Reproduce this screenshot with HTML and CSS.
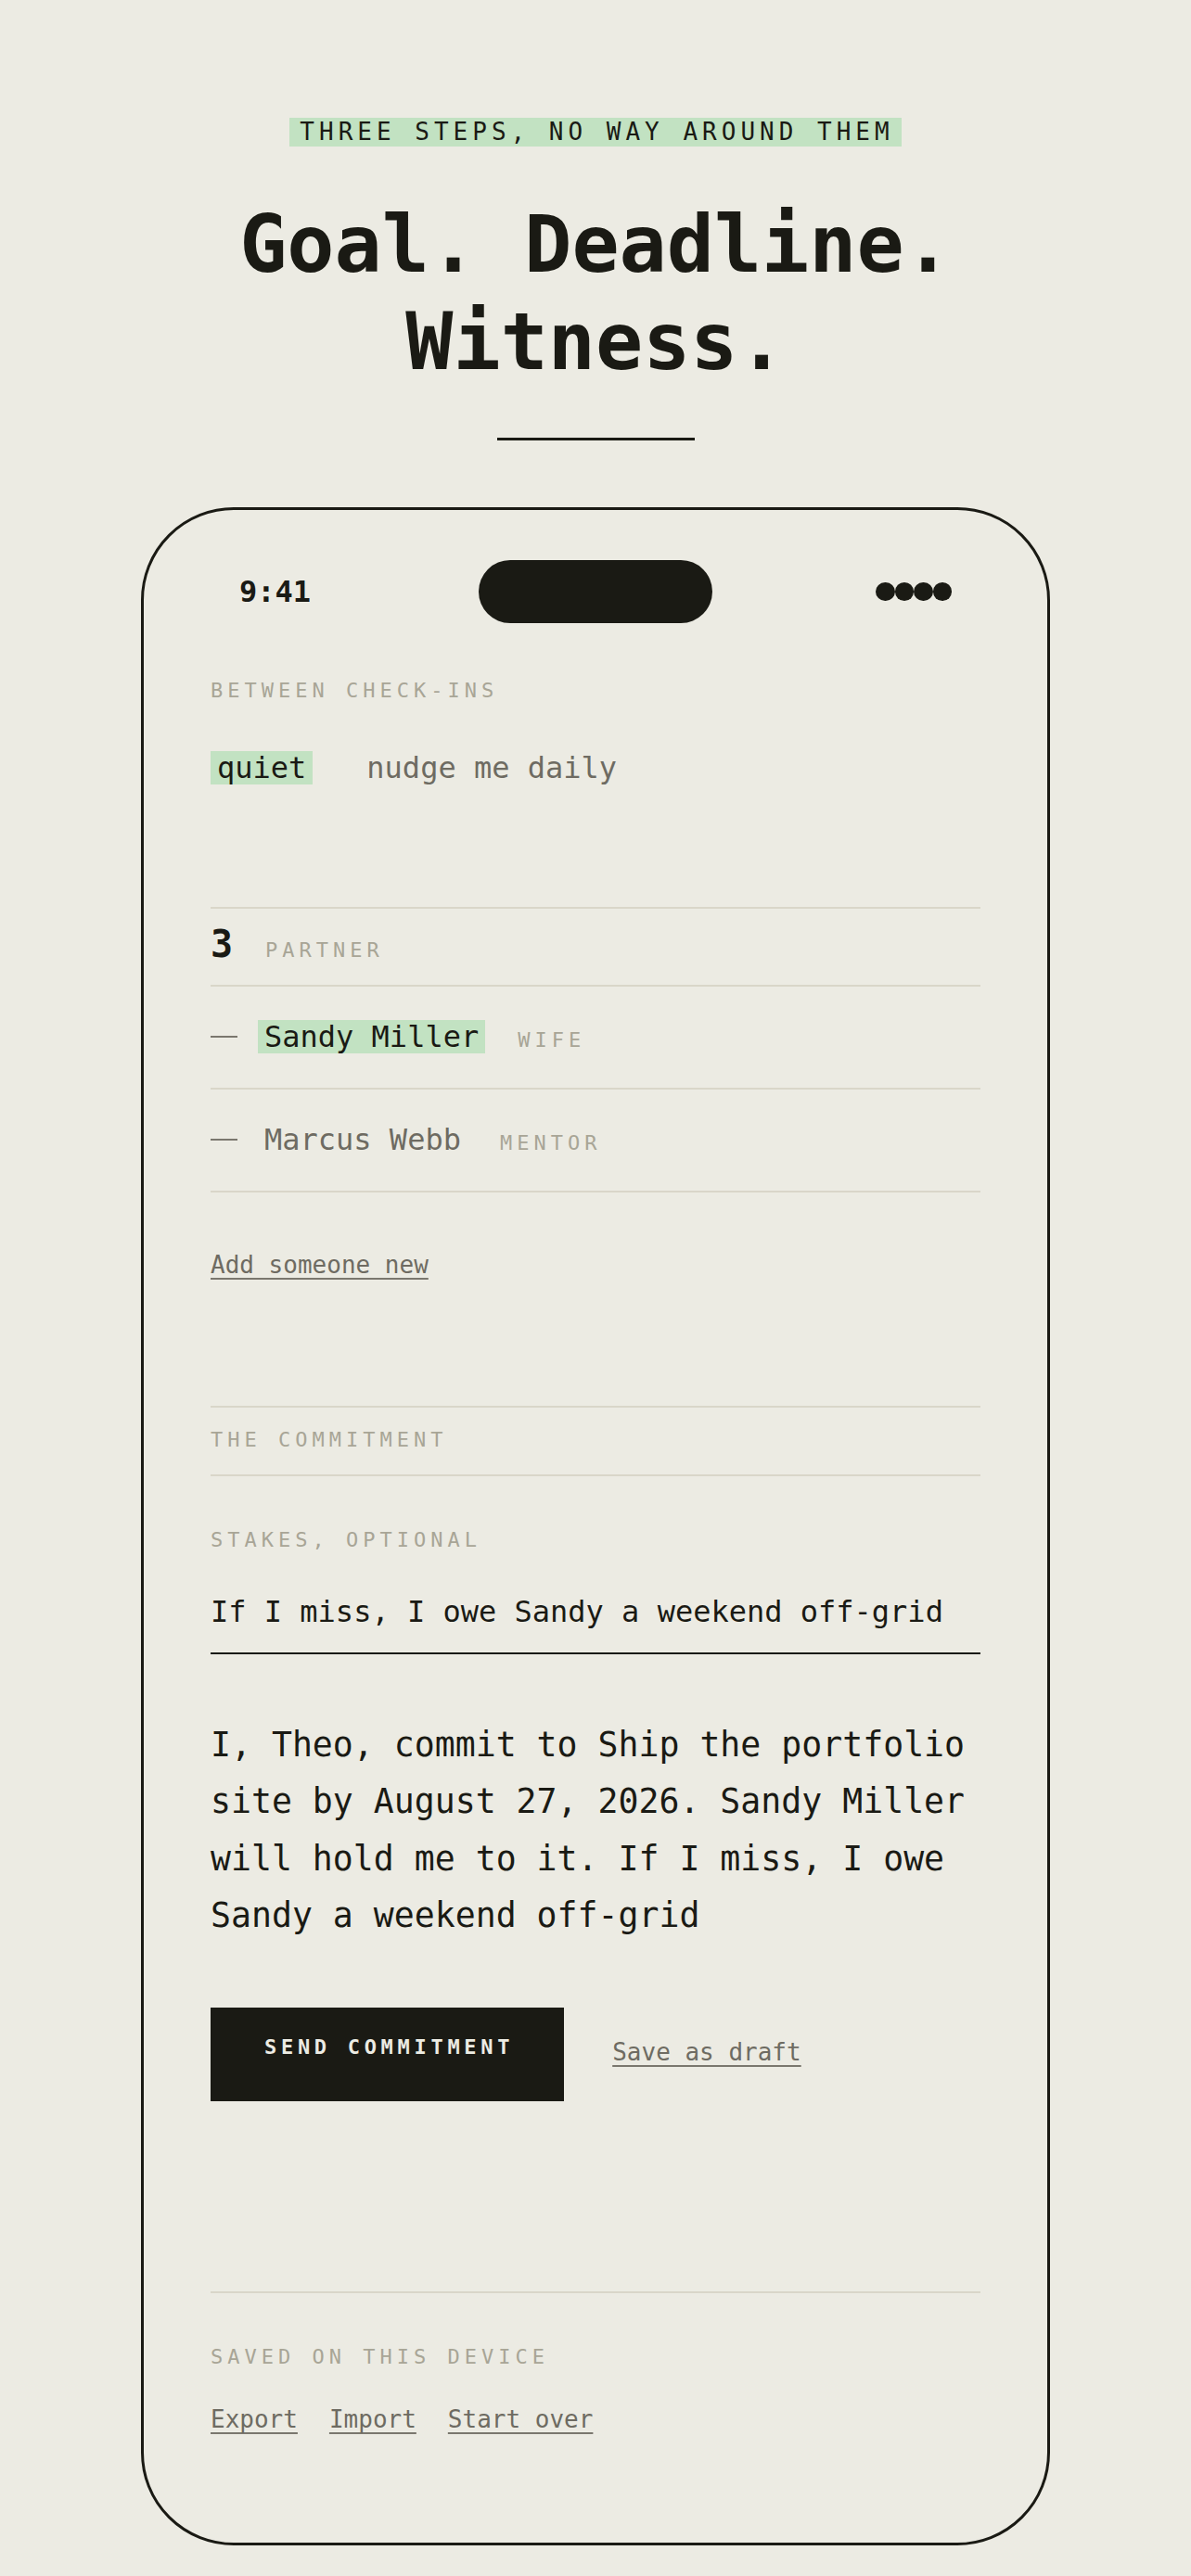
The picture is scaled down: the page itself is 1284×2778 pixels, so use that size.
FILE: index.html
```html
<!DOCTYPE html>
<html lang="en">
<head>
<meta charset="utf-8">
<title>Goal. Deadline. Witness.</title>
<link rel="stylesheet" href="styles.css">
</head>
<body>
<main class="page">
  <header class="intro">
    <p class="eyebrow"><span class="eyebrow-text">THREE STEPS, NO WAY AROUND THEM</span></p>
    <h1 class="title">Goal. Deadline.<br>Witness.</h1>
    <div class="rule"></div>
  </header>

  <section class="phone">
    <div class="status">
      <span class="time">9:41</span>
      <span class="island"></span>
      <span class="signal"><i></i><i></i><i></i><i></i></span>
    </div>

    <div class="block cadence">
      <p class="label">BETWEEN CHECK-INS</p>
      <div class="options">
        <span class="opt is-on">quiet</span>
        <span class="opt">nudge me daily</span>
      </div>
    </div>

    <div class="block partner">
      <div class="step-head">
        <span class="step-num">3</span>
        <span class="label">PARTNER</span>
      </div>
      <div class="person">
        <span class="dash"></span>
        <span class="name is-on">Sandy Miller</span>
        <span class="label role">WIFE</span>
      </div>
      <div class="person">
        <span class="dash"></span>
        <span class="name">Marcus Webb</span>
        <span class="label role">MENTOR</span>
      </div>
      <p class="add-row"><a class="link" href="#">Add someone new</a></p>
    </div>

    <div class="block commitment">
      <div class="section-head">
        <span class="label">THE COMMITMENT</span>
      </div>
      <p class="label stakes-label">STAKES, OPTIONAL</p>
      <div class="field">If I miss, I owe Sandy a weekend off-grid</div>
      <p class="pledge">I, Theo, commit to Ship the portfolio site by August 27, 2026. Sandy Miller will hold me to it. If I miss, I owe Sandy a weekend off-grid</p>
      <div class="actions">
        <button class="btn" type="button">SEND COMMITMENT</button>
        <a class="link draft" href="#">Save as draft</a>
      </div>
    </div>

    <footer class="device">
      <p class="label">SAVED ON THIS DEVICE</p>
      <div class="device-links">
        <a class="link" href="#">Export</a>
        <a class="link" href="#">Import</a>
        <a class="link" href="#">Start over</a>
      </div>
    </footer>
  </section>
</main>
</body>
</html>
```

FILE: styles.css
```css
* { box-sizing: border-box; }

html, body {
  margin: 0;
  padding: 0;
  background: #ecebe3;
}

body {
  font-family: "DejaVu Sans Mono", "Liberation Mono", monospace;
  color: #1a1a14;
}

.page {
  padding: 127px 0 33px;
}

/* ---------- intro ---------- */
.eyebrow {
  margin: 0;
  display: flex;
  justify-content: center;
}

.eyebrow-text {
  display: block;
  background: #c2e2c2;
  font-size: 26px;
  line-height: 31px;
  letter-spacing: 5px;
  padding: 0 8px 0 11px;
  color: #1a1a14;
}

.title {
  margin: 53px 0 0;
  font-size: 85px;
  line-height: 105px;
  font-weight: 700;
  text-align: center;
  letter-spacing: 0;
}

.rule {
  width: 213px;
  height: 3px;
  margin: 51px auto 0;
  background: #1a1a14;
}

/* ---------- phone ---------- */
.phone {
  width: 980px;
  height: 2198px;
  margin: 72px auto 0;
  border: 3px solid #1a1a14;
  border-radius: 100px;
  padding: 54px 72px 0;
  overflow: hidden;
}

.status {
  display: grid;
  grid-template-columns: 1fr auto 1fr;
  align-items: center;
  height: 68px;
  padding: 0 31px;
}

.time {
  justify-self: start;
  font-size: 32px;
  line-height: 32px;
  font-weight: 700;
}

.island {
  display: block;
  width: 252px;
  height: 68px;
  border-radius: 34px;
  background: #1a1a14;
}

.signal {
  justify-self: end;
  display: flex;
}

.signal i {
  display: block;
  width: 20.5px;
  height: 20px;
  border-radius: 50%;
  background: #1a1a14;
}

/* ---------- shared ---------- */
.label {
  margin: 0;
  font-size: 22px;
  line-height: 30px;
  letter-spacing: 5px;
  color: #a8a596;
}

.link {
  font-size: 26px;
  line-height: 30px;
  color: #6e6b62;
  text-decoration: underline;
  text-decoration-thickness: 2px;
  text-underline-offset: 5px;
  text-decoration-color: #7a776e;
}

.is-on {
  background: #c2e2c2;
  color: #1a1a14;
}

/* ---------- cadence ---------- */
.cadence {
  padding-bottom: 132px;
}

.cadence .label {
  margin-top: 58px;
}

.options {
  display: flex;
  gap: 51px;
  margin-top: 50px;
}

.opt {
  font-size: 32px;
  line-height: 36px;
  padding: 0 7px;
  color: #6e6b62;
}

.opt.is-on {
  color: #1a1a14;
}

/* ---------- partner ---------- */
.partner {
  padding-bottom: 137px;
}

.step-head {
  display: flex;
  align-items: baseline;
  gap: 35px;
  height: 86px;
  padding-top: 18px;
  border-top: 2px solid #d9d6c9;
  border-bottom: 2px solid #d9d6c9;
}

.step-num {
  font-size: 40px;
  line-height: 40px;
  font-weight: 700;
  color: #1a1a14;
}

.person {
  display: flex;
  align-items: baseline;
  height: 111px;
  padding: 36px 0 37px;
  border-bottom: 2px solid #d9d6c9;
}

.dash {
  align-self: center;
  display: block;
  width: 29px;
  height: 2px;
  background: #7a776e;
  margin-right: 22px;
}

.name {
  font-size: 32px;
  line-height: 36px;
  padding: 0 7px;
  color: #6e6b62;
}

.name.is-on {
  color: #1a1a14;
}

.role {
  margin-left: 35px;
}

.add-row {
  margin: 63px 0 0;
  font-size: 26px;
  line-height: 30px;
}

/* ---------- commitment ---------- */
.section-head {
  padding: 20px 0 22px;
  border-top: 2px solid #d9d6c9;
  border-bottom: 2px solid #d9d6c9;
}

.section-head .label {
  display: block;
}

.stakes-label {
  margin-top: 54px;
}

.field {
  margin-top: 42px;
  font-size: 32px;
  line-height: 40px;
  padding-bottom: 24px;
  border-bottom: 2px solid #1a1a14;
  color: #1a1a14;
}

.pledge {
  margin: 67px 0 0;
  font-size: 36.5px;
  line-height: 61.3px;
  color: #1a1a14;
}

.actions {
  display: flex;
  align-items: center;
  gap: 52px;
  margin-top: 69px;
}

.btn {
  display: block;
  height: 101px;
  margin: 0;
  padding: 28px 54px 43px 58px;
  border: 0;
  border-radius: 0;
  background: #1a1a14;
  color: #ecebe3;
  font-family: "DejaVu Sans Mono", "Liberation Mono", monospace;
  font-size: 22px;
  line-height: 30px;
  font-weight: 700;
  letter-spacing: 4.7px;
  text-align: left;
}

.draft {
  margin-bottom: 5px;
}

/* ---------- device footer ---------- */
.device {
  margin-top: 205px;
  padding-top: 54px;
  border-top: 2px solid #d9d6c9;
}

.device-links {
  display: flex;
  gap: 34px;
  margin-top: 37px;
}
```
